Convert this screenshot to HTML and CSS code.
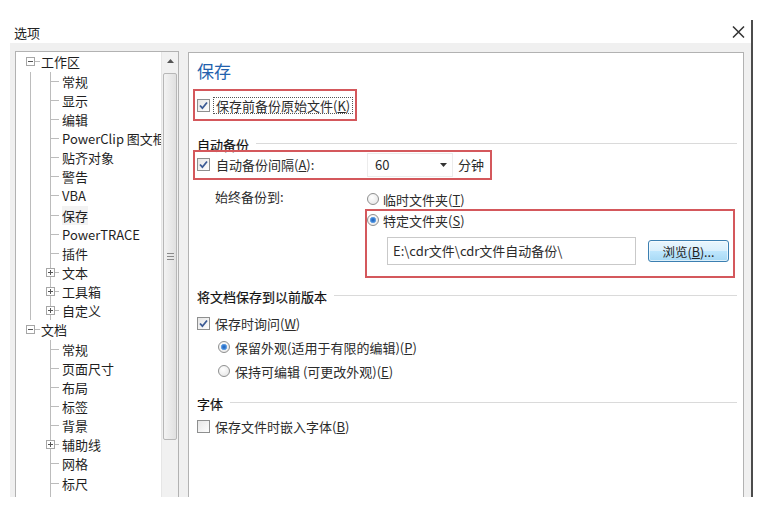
FILE: index.html
```html
<!DOCTYPE html>
<html lang="zh-CN">
<head>
<meta charset="utf-8">
<title>选项</title>
<link rel="stylesheet" href="styles.css">
</head>
<body>
<div class="window">
  <div class="titlebar">
    <span class="title">选项</span>
    <svg class="close" width="13" height="12" viewBox="0 0 13 12"><path d="M1 0.5 L12 11.5 M12 0.5 L1 11.5" stroke="#333" stroke-width="1.5" fill="none"/></svg>
  </div>
  <div class="body">
    <div class="tree">
      <div class="tree-list">
        <div class="row top"><span class="exp minus"></span><span class="tdash"></span><span class="txt">工作区</span></div>
        <div class="group">
          <div class="row child"><span class="conn"></span><span class="txt">常规</span></div>
          <div class="row child"><span class="conn"></span><span class="txt">显示</span></div>
          <div class="row child"><span class="conn"></span><span class="txt">编辑</span></div>
          <div class="row child"><span class="conn"></span><span class="txt">PowerClip 图文框</span></div>
          <div class="row child"><span class="conn"></span><span class="txt">贴齐对象</span></div>
          <div class="row child"><span class="conn"></span><span class="txt">警告</span></div>
          <div class="row child"><span class="conn"></span><span class="txt">VBA</span></div>
          <div class="row child"><span class="conn"></span><span class="txt sel">保存</span></div>
          <div class="row child"><span class="conn"></span><span class="txt">PowerTRACE</span></div>
          <div class="row child"><span class="conn"></span><span class="txt">插件</span></div>
          <div class="row child"><span class="conn"><span class="exp plus cexp"></span></span><span class="txt">文本</span></div>
          <div class="row child"><span class="conn"><span class="exp plus cexp"></span></span><span class="txt">工具箱</span></div>
          <div class="row child"><span class="conn"><span class="exp plus cexp"></span></span><span class="txt">自定义</span></div>
        </div>
        <div class="row top"><span class="exp minus"></span><span class="tdash"></span><span class="txt">文档</span></div>
        <div class="group last">
          <div class="row child"><span class="conn"></span><span class="txt">常规</span></div>
          <div class="row child"><span class="conn"></span><span class="txt">页面尺寸</span></div>
          <div class="row child"><span class="conn"></span><span class="txt">布局</span></div>
          <div class="row child"><span class="conn"></span><span class="txt">标签</span></div>
          <div class="row child"><span class="conn"></span><span class="txt">背景</span></div>
          <div class="row child"><span class="conn"><span class="exp plus cexp"></span></span><span class="txt">辅助线</span></div>
          <div class="row child"><span class="conn"></span><span class="txt">网格</span></div>
          <div class="row child"><span class="conn"></span><span class="txt">标尺</span></div>
          <div class="row child stub"><span class="conn"></span></div>
        </div>
      </div>
      <div class="vscroll">
        <div class="sc-up"><svg width="7" height="4" viewBox="0 0 7 4"><path d="M0 4 L3.5 0 L7 4 Z" fill="#555"/></svg></div>
        <div class="thumb"><span class="grip"></span></div>
      </div>
    </div>

    <div class="panel">
      <div class="heading">保存</div>

      <div class="redbox rb1">
        <span class="cb checked"><svg width="11" height="11" viewBox="0 0 11 11"><path d="M2 5.5 L4.4 8.2 L9 2.5" stroke="#3b5a94" stroke-width="1.8" fill="none"/></svg></span>
        <span class="focus">保存前备份原始文件(<u>K</u>)</span>
      </div>

      <div class="sect s1"><span class="stxt">自动备份</span><span class="sline"></span></div>

      <div class="redbox rb2">
        <span class="cb checked"><svg width="11" height="11" viewBox="0 0 11 11"><path d="M2 5.5 L4.4 8.2 L9 2.5" stroke="#3b5a94" stroke-width="1.8" fill="none"/></svg></span>
        <span class="lbl-int">自动备份间隔(<u>A</u>):</span>
        <span class="dropdown"><span class="dval">60</span><svg width="7" height="4" viewBox="0 0 7 4"><path d="M0 0 L7 0 L3.5 4 Z" fill="#333"/></svg></span>
        <span class="unit">分钟</span>
      </div>

      <div class="backup">
        <span class="blabel">始终备份到:</span>
        <div class="bcol">
          <div class="opt r1"><span class="radio"></span><span class="otxt">临时文件夹(<u>T</u>)</span></div>
          <div class="redbox rb3">
            <div class="opt"><span class="radio on"></span><span class="otxt">特定文件夹(<u>S</u>)</span></div>
            <div class="pathrow">
              <span class="field">E:\cdr文件\cdr文件自动备份\</span>
              <span class="btn">浏览(<u>B</u>)...</span>
            </div>
          </div>
        </div>
      </div>

      <div class="sect s2"><span class="stxt">将文档保存到以前版本</span><span class="sline"></span></div>

      <div class="line cbrow m8">
        <span class="cb checked"><svg width="11" height="11" viewBox="0 0 11 11"><path d="M2 5.5 L4.4 8.2 L9 2.5" stroke="#3b5a94" stroke-width="1.8" fill="none"/></svg></span>
        <span class="ltxt">保存时询问(<u>W</u>)</span>
      </div>
      <div class="line rrow m6"><span class="radio on"></span><span class="ltxt">保留外观(适用于有限的编辑)(<u>P</u>)</span></div>
      <div class="line rrow m6"><span class="radio"></span><span class="ltxt">保持可编辑 (可更改外观)(<u>E</u>)</span></div>

      <div class="sect s3"><span class="stxt">字体</span><span class="sline"></span></div>

      <div class="line cbrow m4">
        <span class="cb"></span>
        <span class="ltxt">保存文件时嵌入字体(<u>B</u>)</span>
      </div>
    </div>
  </div>
</div>
</body>
</html>
```
FILE: styles.css
```css
* { box-sizing: border-box; }
html, body { margin: 0; padding: 0; background: #fff; }
body {
  font-family: "Noto Sans CJK SC", "Liberation Sans", sans-serif;
  font-size: 13px;
  color: #2b2b2b;
  width: 764px;
  height: 507px;
  overflow: hidden;
}
u { text-decoration: underline; text-underline-offset: 1px; }

.window {
  margin-top: 20px;
  width: 753px;
  height: 477px;
  border-right: 2px solid #4c4c4c;
  display: flex;
  flex-direction: column;
}
.titlebar {
  height: 23px;
  display: flex;
  align-items: center;
  justify-content: space-between;
  padding: 0 6px 0 14px;
}
.title { font-size: 13px; line-height: 23px; color: #222; padding-top: 2px; }

.body {
  margin-left: 10px;
  flex: 1;
  background: #f0f0f0;
  display: flex;
  padding: 8px 7px 0 5px;
  gap: 9px;
  overflow: hidden;
}

/* tree */
.tree {
  width: 164px;
  flex: none;
  background: #fff;
  border: 1px solid #b2b2b2;
  border-bottom: none;
  display: flex;
  overflow: hidden;
}
.tree-list {
  width: 145px;
  flex: none;
  overflow: hidden;
  padding-top: 0.4px;
}
.row {
  height: 19.15px;
  display: flex;
  align-items: center;
  white-space: nowrap;
  color: #1f1f1f;
}
.row.top { padding-left: 10px; }
.exp {
  width: 9px;
  height: 9px;
  border: 1px solid #a6a6a6;
  background: #fff;
  flex: none;
  display: inline-block;
  background-image: linear-gradient(#555, #555);
  background-size: 5px 1px;
  background-position: center;
  background-repeat: no-repeat;
}
.exp.plus {
  background-image: linear-gradient(#555, #555), linear-gradient(#555, #555);
  background-size: 5px 1px, 1px 5px;
}
.tdash { width: 5px; height: 1px; background: #bcbcbc; flex: none; }
.row.top .txt { margin-left: 1px; }

.group {
  margin-left: 14px;
  border-left: 1px solid #bcbcbc;
}
.group.last { border-left-color: transparent; }
.row.child { padding-left: 19px; }
.conn {
  position: relative;
  width: 9px;
  height: 100%;
  flex: none;
  border-left: 1px solid #bcbcbc;
  background: linear-gradient(#bcbcbc, #bcbcbc) no-repeat 0 50% / 100% 1px;
}
.cexp {
  position: absolute;
  left: -5px;
  top: 5px;
}
.row.child .txt { margin-left: 3px; }
.txt.sel { background: #f3f3f3; }

.vscroll {
  width: 17px;
  flex: none;
  background: #f1f1f1;
  border-left: 1px solid #e6e6e6;
  display: flex;
  flex-direction: column;
  align-items: center;
}
.sc-up {
  height: 17px;
  width: 100%;
  display: flex;
  align-items: center;
  justify-content: center;
}
.thumb {
  margin-top: 4px;
  width: 14px;
  height: 367px;
  border: 1px solid #b7b7b7;
  border-radius: 2px;
  background: linear-gradient(to right, #f3f3f3, #e0e0e0);
  display: flex;
  align-items: center;
  justify-content: center;
}
.grip {
  width: 7px;
  height: 7px;
  background: linear-gradient(#8a8a8a, #8a8a8a) 0 0 / 100% 1px no-repeat,
              linear-gradient(#8a8a8a, #8a8a8a) 0 3px / 100% 1px no-repeat,
              linear-gradient(#8a8a8a, #8a8a8a) 0 6px / 100% 1px no-repeat;
}

/* panel */
.panel {
  margin-top: 1px;
  width: 556px;
  flex: none;
  background: #fff;
  border: 1px solid #b2b2b2;
  border-bottom: none;
  padding: 0 6px 0 8px;
  display: flex;
  flex-direction: column;
  overflow: hidden;
}
.heading {
  margin-top: 8px;
  height: 20px;
  line-height: 20px;
  font-size: 17px;
  color: #2361ad;
}
.redbox {
  border: 2px solid #d4585c;
  display: flex;
  align-items: center;
}
.rb1 {
  margin-top: 8px;
  margin-left: -4px;
  width: 164px;
  height: 32px;
  padding-left: 2px;
}
.cb {
  width: 13px;
  height: 13px;
  flex: none;
  border: 1px solid #8e8f8f;
  background: linear-gradient(135deg, #e6e6e6, #fdfdfd);
  display: inline-flex;
  align-items: center;
  justify-content: center;
}
.focus {
  margin-left: 3px;
  padding: 0 2px;
  border: 1px dotted #555;
  line-height: 15px;
  white-space: nowrap;
}

.sect {
  display: flex;
  align-items: center;
  height: 18px;
}
.stxt { color: #111; white-space: nowrap; line-height: 18px; -webkit-text-stroke: 0.2px #111; }
.sline {
  flex: 1;
  height: 1px;
  background: #dadada;
  margin-left: 7px;
  margin-top: -4px;
}
.s1 { margin-top: 15px; margin-bottom: -4px; }
.s2 { margin-top: 10px; }
.s3 { margin-top: 15px; }

.rb2 {
  margin-left: -4px;
  width: 299px;
  height: 30px;
  padding-left: 2px;
  padding-bottom: 2px;
}
.lbl-int { margin-left: 6px; width: 151px; white-space: nowrap; }
.dropdown {
  width: 86px;
  height: 24px;
  border: 1px solid #ececec;
  display: flex;
  align-items: center;
  justify-content: space-between;
  padding: 0 5px 0 7px;
  margin-top: 1px;
}
.unit { margin-left: 5px; }

.backup {
  margin-top: 8px;
  display: flex;
  padding-left: 18px;
}
.blabel { width: 150px; flex: none; height: 18px; line-height: 18px; }
.bcol { padding-top: 2px; display: flex; flex-direction: column; }
.opt {
  height: 18px;
  display: flex;
  align-items: center;
  white-space: nowrap;
}
.opt.r1 { margin-left: 2px; }
.otxt { margin-left: 4px; }
.radio {
  width: 12px;
  height: 12px;
  flex: none;
  border-radius: 50%;
  border: 1px solid #8e8f8f;
  background: radial-gradient(circle at 40% 35%, #ffffff, #e2e2e2);
  display: inline-block;
}
.radio.on {
  background:
    radial-gradient(circle at 50% 50%, #1f5fb8 0, #3d84d6 2px, #7fb3ea 3px, rgba(255,255,255,0) 3.5px),
    radial-gradient(circle at 40% 35%, #ffffff, #e4e4e4);
}
.rb3 {
  margin-top: 1px;
  width: 370px;
  height: 69px;
  flex-direction: column;
  align-items: stretch;
  padding: 0;
}
.pathrow {
  margin-top: 8px;
  display: flex;
  align-items: center;
}
.field {
  margin-left: 20px;
  width: 249px;
  height: 28px;
  border: 1px solid #c9c9c9;
  padding-left: 5px;
  line-height: 26px;
  white-space: nowrap;
}
.btn {
  margin-left: 12px;
  width: 81px;
  height: 22px;
  border: 1px solid #3c7fb1;
  border-radius: 3px;
  background: linear-gradient(#eaf6fd, #d9effc 50%, #bee6fd 51%, #a7d9f5);
  box-shadow: inset 0 0 0 1px rgba(255,255,255,0.6);
  display: flex;
  align-items: center;
  justify-content: center;
  font-size: 12.5px;
  color: #222;
}

.line {
  height: 18px;
  display: flex;
  align-items: center;
  white-space: nowrap;
}
.m8 { margin-top: 8px; }
.m6 { margin-top: 6px; }
.m4 { margin-top: 4px; }
.cbrow .ltxt { margin-left: 5px; }
.rrow { padding-left: 21px; }
.rrow .ltxt { margin-left: 5px; }
```
